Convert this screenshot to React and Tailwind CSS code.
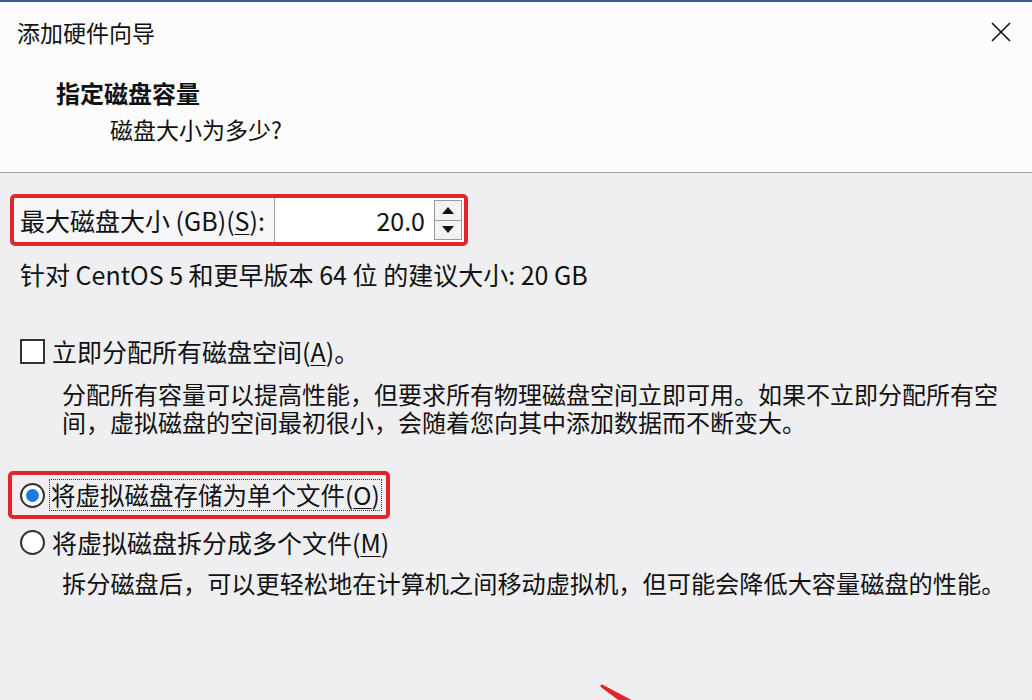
// 添加硬件向导 — 指定磁盘容量
import React from "react";

const FONT = { fontFamily: '"Noto Sans CJK SC", "Noto Sans", sans-serif' };

function Mnemonic({ k }) {
  return (
    <>
      (<span className="underline underline-offset-[3px] decoration-1">{k}</span>)
    </>
  );
}

function CloseIcon() {
  return (
    <svg width="22" height="22" viewBox="0 0 22 22" fill="none" stroke="#111" strokeWidth="1.6">
      <path d="M2 2 L20 20 M20 2 L2 20" />
    </svg>
  );
}

function Spinner() {
  return (
    <div className="flex flex-col w-[28px] h-[40px] border border-[#9a9a9a] bg-[#f3f3f3]">
      <div className="flex-1 flex items-center justify-center border-b border-[#9a9a9a]">
        <svg width="12" height="7" viewBox="0 0 12 7"><path d="M6 0 L12 7 L0 7 Z" fill="#111" /></svg>
      </div>
      <div className="flex-1 flex items-center justify-center">
        <svg width="12" height="7" viewBox="0 0 12 7"><path d="M0 0 L12 0 L6 7 Z" fill="#111" /></svg>
      </div>
    </div>
  );
}

function Radio({ checked }) {
  return (
    <span className="w-[25px] h-[25px] rounded-full border-2 border-[#333] bg-white flex items-center justify-center shrink-0">
      {checked && <span className="w-[13px] h-[13px] rounded-full bg-[#1f7ae0]" />}
    </span>
  );
}

export default function App() {
  return (
    <div className="relative w-[1032px] h-[700px] overflow-hidden bg-[#efeff1] text-[#111]" style={FONT}>
      <div className="h-[2px] bg-[#3d5b84]" />

      {/* header */}
      <div className="bg-[#fcfcfd] border-b border-[#a3a3a3] pb-[25px]">
        <div className="h-[60px] flex items-center justify-between pl-[17px] pr-[20px]">
          <span className="text-[23px] leading-none">添加硬件向导</span>
          <CloseIcon />
        </div>
        <div className="mt-[13px] pl-[56px] text-[24px] leading-[36px] font-bold">指定磁盘容量</div>
        <div className="pl-[110px] text-[23px] leading-[36px]">磁盘大小为多少?</div>
      </div>

      {/* body */}
      <div className="text-[25px]">
        <div className="mt-[21px] ml-[10px] w-[458px] h-[52px] border-4 border-[#e1262b] rounded-[5px] flex items-center bg-[#f6f6f8]">
          <span className="pl-[6px] w-[260px] leading-none whitespace-nowrap">
            最大磁盘大小 (GB)<Mnemonic k="S" />:
          </span>
          <div className="flex-1 h-full bg-white border-l border-[#a0a0a0] flex items-center justify-end pr-[8px] leading-none">
            20.0
          </div>
          <div className="pl-[1px] pr-[2px] bg-white h-full flex items-center">
            <Spinner />
          </div>
        </div>

        <div className="mt-[15px] pl-[20px] leading-[27px]">针对 CentOS 5 和更早版本 64 位 的建议大小: 20 GB</div>

        <div className="mt-[50px] pl-[20px] flex items-center gap-[7px] leading-[27px]">
          <span className="w-[25px] h-[25px] border-2 border-[#333] bg-white shrink-0" />
          <span>
            立即分配所有磁盘空间<Mnemonic k="A" />。
          </span>
        </div>
        <div className="mt-[15px] pl-[62px] text-[24px] leading-[28px] whitespace-nowrap">
          分配所有容量可以提高性能，但要求所有物理磁盘空间立即可用。如果不立即分配所有空
          <br />
          间，虚拟磁盘的空间最初很小，会随着您向其中添加数据而不断变大。
        </div>

        <div className="mt-[35px] ml-[8px] w-[382px] h-[48px] border-4 border-[#e1262b] rounded-[5px] flex items-center pl-[8px] gap-[4px]">
          <Radio checked />
          <span className="border border-dotted border-[#333] px-[1px] text-[24.5px] leading-[30px] whitespace-nowrap">
            将虚拟磁盘存储为单个文件<Mnemonic k="O" />
          </span>
        </div>

        <div className="mt-[10px] pl-[20px] flex items-center gap-[7px] leading-[27px]">
          <Radio />
          <span>
            将虚拟磁盘拆分成多个文件<Mnemonic k="M" />
          </span>
        </div>
        <div className="mt-[13px] pl-[62px] text-[24.2px] leading-[27px] whitespace-nowrap">
          拆分磁盘后，可以更轻松地在计算机之间移动虚拟机，但可能会降低大容量磁盘的性能。
        </div>
      </div>

      {/* annotation arrow tail */}
      <svg className="absolute left-[596px] top-[680px]" width="50" height="24" viewBox="0 0 50 24">
        <path d="M6 6 L40 24 L30 24 Z" fill="#e1262b" stroke="#e1262b" strokeWidth="3" strokeLinejoin="round" />
      </svg>
    </div>
  );
}
